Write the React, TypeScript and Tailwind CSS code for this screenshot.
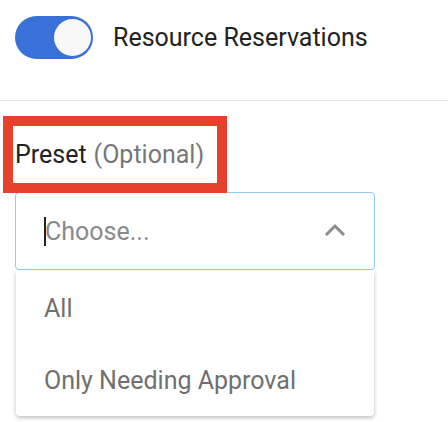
import React from 'react';

export default function App() {
  return (
    <div className="w-[448px] h-[422px] bg-white overflow-hidden font-['Roboto',sans-serif] relative">
      {/* toggle row */}
      <div className="flex items-center h-[75px] pl-[15px] mb-[25px]">
        <div className="w-[78px] h-[43px] rounded-full bg-[#3a71d9] flex items-center justify-end pr-[2px]">
          <div className="w-[37px] h-[37px] rounded-full bg-[#f8f8f8]" />
        </div>
        <span className="ml-[20px] text-[25px] text-[#222222] leading-none">Resource Reservations</span>
      </div>
      <div className="h-px bg-[#e2e2e2]" />

      {/* field */}
      <div className="relative z-10 mt-[15px] ml-[3px] w-[224px] h-[77px] border-[10px] border-[#e8412b] bg-white flex items-center pl-[2px]">
        <span className="text-[25px] leading-none text-[#222222]">Preset</span>
        <span className="ml-[7px] text-[25px] leading-none text-[#777777]">(Optional)</span>
      </div>
      <div className="-mt-px ml-[15px] w-[360px] h-[78px] border border-[#90c8f8] rounded-[4px] flex items-center pl-[28px] pr-[28px]">
        <span className="w-[2px] h-[29px] bg-[#222222] -mr-[1px]" />
        <span className="text-[25px] leading-none text-[#8a8a8a] flex-1">Choose...</span>
        <svg width="22" height="14" viewBox="0 0 22 14" className="mt-[-2px]">
          <path d="M2 12 L11 3 L20 12" fill="none" stroke="#8c8c8c" strokeWidth="3" />
        </svg>
      </div>

      {/* menu */}
      <div className="ml-[16px] mt-px w-[358px] bg-white rounded-b-[4px] shadow-[0_2px_4px_rgba(0,0,0,0.25)] pt-px">
        <div className="h-[72px] flex items-center pl-[28px] text-[25px] leading-none text-[#707070]">All</div>
        <div className="h-[72px] flex items-center pl-[28px] text-[25px] leading-none text-[#707070]">Only Needing Approval</div>
      </div>
    </div>
  );
}
